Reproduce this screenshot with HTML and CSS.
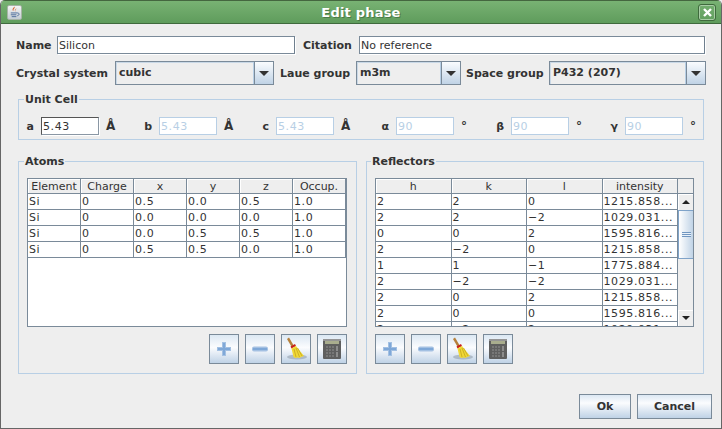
FILE: index.html
```html
<!DOCTYPE html>
<html lang="en">
<head>
<meta charset="UTF-8">
<title>Edit phase</title>
<link rel="stylesheet" href="styles.css">
</head>
<body>

<svg class="defs" width="0" height="0">
  <symbol id="plus" viewBox="0 0 28 28">
    <path d="M12 7h4v5h5v4h-5v5h-4v-5H7v-4h5z" fill="#a3c0e2"/>
    <path d="M13 8h2v12h-2zM8 13h12v2H8z" fill="#7fa8d8"/>
  </symbol>
  <symbol id="minus" viewBox="0 0 28 28">
    <rect x="6" y="11.500" width="16" height="5" rx="2" fill="#a3c0e2"/>
    <rect x="7" y="13" width="14" height="2" fill="#7fa8d8"/>
  </symbol>
  <symbol id="broom" viewBox="0 0 28 28">
    <ellipse cx="15" cy="22" rx="10" ry="2.500" fill="#93a0ad" opacity=".6"/>
    <path d="M5 4l2-1.500 5 8.500-2 1.500z" fill="#b5803c"/>
    <path d="M8.500 11.500l4.500-2.500 1 2-4.500 2.500z" fill="#c9221c"/>
    <path d="M9.500 13.500l4.500-2.500 8 10-3 1-1.500 1-2-.5-2 .5-2-1z" fill="#f0d835"/>
    <path d="M12 14l2 8M14 13l3.500 9M15.500 13l4.500 8" stroke="#cdb024" fill="none"/>
  </symbol>
  <symbol id="calc" viewBox="0 0 28 28">
    <rect x="5" y="4" width="18" height="20" rx="1" fill="#5f5f5f"/>
    <rect x="5" y="4" width="18" height="2" fill="#959595"/>
    <rect x="7" y="6" width="14" height="3" fill="#a9ad8e"/>
    <path d="M8 11h2v2H8zM11 11h2v2h-2zM14 11h2v2h-2zM8 14h2v2H8zM11 14h2v2h-2zM14 14h2v2h-2zM8 17h2v2H8zM11 17h2v2h-2zM14 17h2v2h-2zM8 20h2v2H8zM11 20h2v2h-2zM14 20h2v2h-2z" fill="#777"/>
    <path d="M18 11h2v5h-2zM18 17h2v5h-2z" fill="#8c8c8c"/>
  </symbol>
</svg>

<div class="window">

  <div class="titlebar">
    <span class="title-icon">
      <svg width="14" height="14" viewBox="0 0 14 14">
        <path d="M7 1c1 2-2 3-1 5 -2-1-1-3 1-5zM9 3c0 2-2 2-1 4 -1-1-1-2 1-4z" fill="#d8612a"/>
        <path d="M3 8h7M3 10h6M4 12h5" stroke="#4a6a9a" fill="none"/>
        <path d="M10 8c3 0 2 3 0 3" stroke="#4a6a9a" fill="none"/>
      </svg>
    </span>
    <span class="title-text">Edit phase</span>
    <span class="title-close">
      <svg width="11" height="11" viewBox="0 0 11 11">
        <path d="M2 2l7 7M9 2l-7 7" stroke="#fff" stroke-width="2.4" fill="none"/>
      </svg>
    </span>
  </div>

  <div class="content">

    <div class="row row-name">
      <label class="lbl lbl-name">Name</label>
      <input class="field field-name" type="text" value="Silicon">
      <label class="lbl lbl-citation">Citation</label>
      <input class="field field-citation" type="text" value="No reference">
    </div>

    <div class="row row-combos">
      <label class="lbl lbl-crystal">Crystal system</label>
      <div class="combo combo-crystal"><span class="combo-value">cubic</span><span class="combo-arrow"></span></div>
      <label class="lbl lbl-laue">Laue group</label>
      <div class="combo combo-laue"><span class="combo-value">m3m</span><span class="combo-arrow"></span></div>
      <label class="lbl lbl-space">Space group</label>
      <div class="combo combo-space"><span class="combo-value">P432 (207)</span><span class="combo-arrow"></span></div>
    </div>

    <fieldset class="group unit-cell">
      <legend>Unit Cell</legend>
      <div class="cell-grid">
        <div class="cell"><label class="cell-lbl">a</label><input class="field cell-input focus" type="text" value="5.43"><span class="cell-unit">Å</span></div>
        <div class="cell"><label class="cell-lbl">b</label><input class="field cell-input off" type="text" value="5.43" disabled><span class="cell-unit">Å</span></div>
        <div class="cell"><label class="cell-lbl">c</label><input class="field cell-input off" type="text" value="5.43" disabled><span class="cell-unit">Å</span></div>
        <div class="cell"><label class="cell-lbl">α</label><input class="field cell-input off" type="text" value="90" disabled><span class="cell-unit">°</span></div>
        <div class="cell"><label class="cell-lbl">β</label><input class="field cell-input off" type="text" value="90" disabled><span class="cell-unit">°</span></div>
        <div class="cell"><label class="cell-lbl">γ</label><input class="field cell-input off" type="text" value="90" disabled><span class="cell-unit">°</span></div>
      </div>
    </fieldset>

    <div class="panels">

      <fieldset class="group panel panel-atoms">
        <legend>Atoms</legend>
        <div class="table-frame">
          <table class="grid">
            <thead>
              <tr><th>Element</th><th>Charge</th><th>x</th><th>y</th><th>z</th><th>Occup.</th></tr>
            </thead>
            <tbody>
              <tr><td>Si</td><td>0</td><td>0.5</td><td>0.0</td><td>0.5</td><td>1.0</td></tr>
              <tr><td>Si</td><td>0</td><td>0.0</td><td>0.0</td><td>0.0</td><td>1.0</td></tr>
              <tr><td>Si</td><td>0</td><td>0.0</td><td>0.5</td><td>0.5</td><td>1.0</td></tr>
              <tr><td>Si</td><td>0</td><td>0.5</td><td>0.5</td><td>0.0</td><td>1.0</td></tr>
            </tbody>
          </table>
        </div>
        <div class="tools tools-right">
          <button class="tool"><svg width="28" height="28"><use href="#plus"/></svg></button>
          <button class="tool"><svg width="28" height="28"><use href="#minus"/></svg></button>
          <button class="tool"><svg width="28" height="28"><use href="#broom"/></svg></button>
          <button class="tool"><svg width="28" height="28"><use href="#calc"/></svg></button>
        </div>
      </fieldset>

      <fieldset class="group panel panel-reflectors">
        <legend>Reflectors</legend>
        <div class="table-frame with-scroll">
          <table class="grid">
            <thead>
              <tr><th>h</th><th>k</th><th>l</th><th>intensity</th></tr>
            </thead>
            <tbody>
              <tr><td>2</td><td>2</td><td>0</td><td>1215.858...</td></tr>
              <tr><td>2</td><td>2</td><td>−2</td><td>1029.031...</td></tr>
              <tr><td>0</td><td>0</td><td>2</td><td>1595.816...</td></tr>
              <tr><td>2</td><td>−2</td><td>0</td><td>1215.858...</td></tr>
              <tr><td>1</td><td>1</td><td>−1</td><td>1775.884...</td></tr>
              <tr><td>2</td><td>−2</td><td>−2</td><td>1029.031...</td></tr>
              <tr><td>2</td><td>0</td><td>2</td><td>1215.858...</td></tr>
              <tr><td>2</td><td>0</td><td>0</td><td>1595.816...</td></tr>
              <tr><td>2</td><td>−2</td><td>2</td><td>1029.031...</td></tr>
            </tbody>
          </table>
          <div class="scrollbar">
            <div class="scroll-corner"></div>
            <div class="scroll-btn"><span class="arrow-up"></span></div>
            <div class="scroll-thumb"><span class="thumb-grip"></span></div>
            <div class="scroll-track"></div>
            <div class="scroll-btn"><span class="arrow-down"></span></div>
          </div>
        </div>
        <div class="tools">
          <button class="tool"><svg width="28" height="28"><use href="#plus"/></svg></button>
          <button class="tool"><svg width="28" height="28"><use href="#minus"/></svg></button>
          <button class="tool"><svg width="28" height="28"><use href="#broom"/></svg></button>
          <button class="tool"><svg width="28" height="28"><use href="#calc"/></svg></button>
        </div>
      </fieldset>

    </div>

    <div class="actions">
      <button class="action action-ok">Ok</button>
      <button class="action action-cancel">Cancel</button>
    </div>

  </div>
</div>

</body>
</html>
```

FILE: styles.css
```css
* {
  box-sizing: border-box;
}
body {
  margin: 0;
  background-color: #eeeeee;
  font-family: "DejaVu Sans", sans-serif;
  font-size: 11px;
  color: #333;
}
.defs {
  display: block;
  height: 0;
}

.window {
  width: 722px;
  height: 429px;
  border: 1px solid #666;
  border-top: 0;
  border-radius: 5px 5px 0 0;
  overflow: hidden;
  background-color: #eeeeee;
}

/* title bar */
.titlebar {
  display: flex;
  align-items: center;
  justify-content: space-between;
  height: 24px;
  padding: 0 6px;
  background: linear-gradient(#78b273, #5f9c5c);
  border-top: 1px solid #44663f;
  border-bottom: 1px solid #3f6a3d;
}
.title-icon {
  display: flex;
  align-items: center;
  justify-content: center;
  width: 15px;
  height: 15px;
  background: linear-gradient(#f4f4f4, #c4cdd4);
  border: 1px solid #a6b4a6;
  border-radius: 2px;
}
.title-text {
  margin-left: 2px;
  color: #fff;
  font-weight: bold;
  font-size: 13px;
  letter-spacing: .2px;
  text-shadow: 1px 1px 0 #4a7a48;
}
.title-close {
  display: flex;
  align-items: center;
  justify-content: center;
  width: 18px;
  height: 17px;
  margin-right: -1px;
  border: 1px solid #3f6a3d;
  border-radius: 3px;
  box-shadow: inset 0 0 0 1px #a8cda5;
}

.content {
  padding: 12px 0 0 15px;
}

/* form rows */
.row {
  display: flex;
  align-items: center;
}
.row-name {
  height: 18px;
}
.row-combos {
  height: 24px;
  margin-top: 7px;
}
.lbl {
  font-weight: bold;
  white-space: nowrap;
}
.lbl-name { width: 41px; }
.lbl-citation { width: 56px; margin-left: 8px; }
.lbl-crystal { width: 99px; }
.lbl-laue { width: 76px; margin-left: 6px; }
.lbl-space { width: 83px; margin-left: 5px; }

.field {
  height: 18px;
  padding: 0 1px;
  border: 1px solid #7a8a99;
  border-right-color: #6f7f8e;
  background-color: #fff;
  font-family: inherit;
  font-size: 11px;
  color: #333;
  outline: 0;
  box-shadow: 1px 1px 0 #fff;
}
.field-name { width: 238px; }
.field-citation { width: 346px; }

.combo {
  display: flex;
  height: 24px;
  border: 1px solid #7a8a99;
  background-color: #eeeeee;
}
.combo-crystal { width: 159px; }
.combo-laue { width: 105px; }
.combo-space { width: 157px; }
.combo-value {
  flex: 1;
  padding: 4px 2px 0 3px;
  font-weight: bold;
  border-right: 1px solid #b8cfe5;
  box-shadow: inset 1px 1px 0 #c9d8e6;
}
.combo-arrow {
  display: flex;
  align-items: center;
  justify-content: center;
  width: 19px;
  background: linear-gradient(#fafcfe, #c0d3e6);
  border-left: 1px solid #7a8a99;
}
.combo-arrow::after {
  content: "";
  border-left: 5px solid transparent;
  border-right: 5px solid transparent;
  border-top: 5px solid #333;
}

/* titled groups */
.group {
  margin: 0;
  padding: 0;
  min-width: 0;
  border: 1px solid #b8cfe5;
}
.group legend {
  padding: 0 1px;
  margin-left: 5px;
  font-weight: bold;
  line-height: 13px;
}
.unit-cell {
  width: 686px;
  height: 47px;
  margin: 8px 0 0 2px;
}
.cell-grid {
  display: grid;
  grid-template-columns: 118px 117px 120px 115px 114px 100px;
  padding: 11px 0 0 2px;
}
.cell {
  display: flex;
  align-items: center;
  height: 18px;
}
.cell-lbl {
  width: 20px;
  padding-right: 7px;
  text-align: right;
  font-weight: bold;
}
.cell-input {
  width: 58px;
  letter-spacing: .6px;
}
.cell-input.focus {
  border-color: #555 #8a97a4 #8a97a4 #555;
}
.cell-input.off {
  border-color: #b8cfe5;
  color: #b8cfe5;
  box-shadow: none;
}
.cell-unit {
  margin-left: 7px;
  font-weight: bold;
  font-size: 12px;
}

/* atoms + reflectors */
.panels {
  display: flex;
  gap: 9px;
  margin: 15px 0 0 2px;
}
.panel {
  height: 219px;
  padding: 10px 9px 0 8px;
}
.panel legend {
  margin-left: -3px;
}
.panel-atoms { width: 339px; }
.panel-reflectors { width: 338px; }
.panel-reflectors legend { margin-left: -4px; }

.table-frame {
  display: flex;
  height: 149px;
  border: 1px solid #7a8a99;
  background-color: #fff;
  overflow: hidden;
}
.grid {
  width: 318px;
  border-collapse: separate;
  border-spacing: 0;
  table-layout: fixed;
  align-self: flex-start;
}
.with-scroll .grid {
  width: 302px;
}
.grid th {
  height: 15px;
  padding: 2px 0 0;
  line-height: 12px;
  font-weight: normal;
  text-align: center;
  background-color: #eeeeee;
  border-right: 1px solid #7a8a99;
  border-bottom: 1px solid #7a8a99;
  box-shadow: inset 1px 1px 0 #fff;
  white-space: nowrap;
  overflow: hidden;
}
.grid td {
  height: 16px;
  padding: 1px 0 0 1px;
  line-height: 14px;
  letter-spacing: .6px;
  border-right: 1px solid #7a8a99;
  border-bottom: 1px solid #7a8a99;
  white-space: nowrap;
  overflow: hidden;
}

.scrollbar {
  display: flex;
  flex-direction: column;
  width: 15px;
  flex: none;
  background-color: #eeeeee;
}
.scroll-corner {
  height: 15px;
  flex: none;
  border-bottom: 1px solid #7a8a99;
}
.scroll-btn {
  display: flex;
  align-items: center;
  justify-content: center;
  height: 16px;
  flex: none;
  background-color: #eeeeee;
  box-shadow: inset 1px 1px 0 #fff;
}
.arrow-up {
  border-left: 4px solid transparent;
  border-right: 4px solid transparent;
  border-bottom: 4px solid #222;
}
.arrow-down {
  border-left: 4px solid transparent;
  border-right: 4px solid transparent;
  border-top: 4px solid #222;
}
.scroll-thumb {
  display: flex;
  align-items: center;
  justify-content: center;
  height: 49px;
  flex: none;
  background: linear-gradient(90deg, #fff, #c0d3e6);
  border: 1px solid #7fa3c9;
  border-right: 0;
}
.thumb-grip {
  width: 9px;
  height: 5px;
  background: repeating-linear-gradient(#7096c0 0 1px, #e8f0f8 1px 2px);
}
.scroll-track {
  flex: 1;
  background-color: #eeeeee;
}

.tools {
  display: flex;
  gap: 6px;
  margin-top: 7px;
}
.tools-right {
  justify-content: flex-end;
}
.tool {
  display: flex;
  align-items: center;
  justify-content: center;
  width: 30px;
  height: 30px;
  padding: 0;
  border: 1px solid #7a8a99;
  background: linear-gradient(#dce8f3, #fbfcfe 45%, #bfd2e6);
}

.actions {
  display: flex;
  justify-content: flex-end;
  gap: 6px;
  margin: 20px 9px 0 0;
}
.action {
  height: 25px;
  padding: 0;
  border: 1px solid #7a8a99;
  background: linear-gradient(#dce8f3, #fbfcfe 35%, #bfd2e6);
  font-family: inherit;
  font-size: 11px;
  font-weight: bold;
  color: #333;
}
.action-ok { width: 52px; }
.action-cancel { width: 75px; }
```
